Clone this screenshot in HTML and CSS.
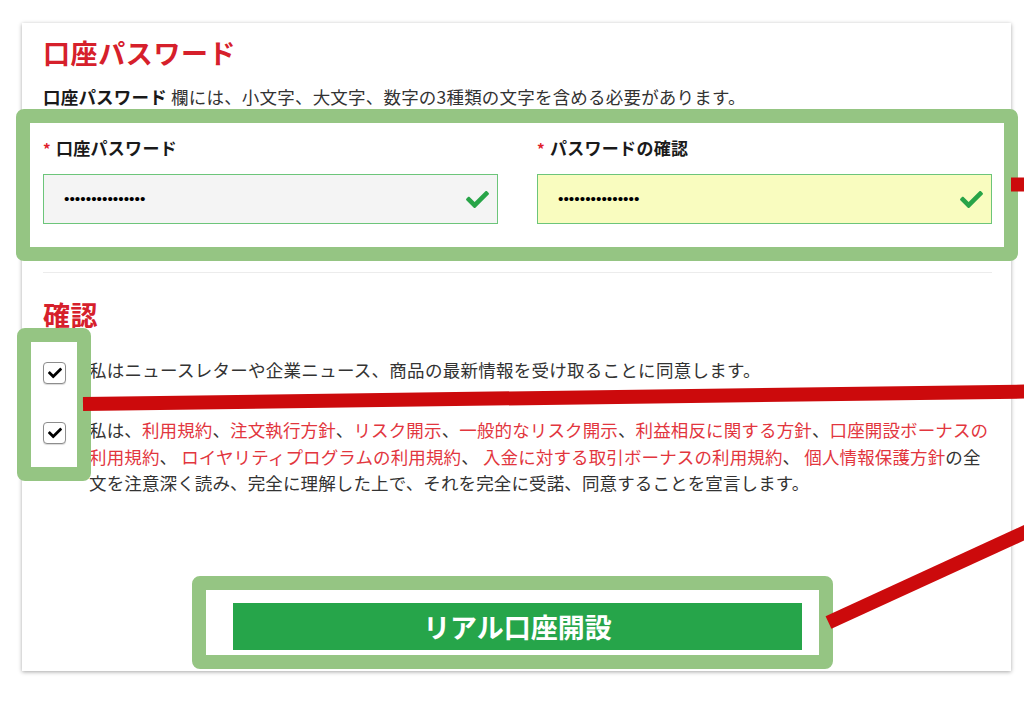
FILE: index.html
```html
<!DOCTYPE html>
<html lang="ja">
<head>
    <meta charset="UTF-8">
    <meta name="viewport" content="width=device-width, initial-scale=1.0">
    <title>口座パスワード</title>
    <link rel="stylesheet" href="styles.css">
</head>
<body>

<div class="page">
    <div class="card">
        <h2 class="title">口座パスワード</h2>
        <p class="note"><strong>口座パスワード</strong> 欄には、小文字、大文字、数字の3種類の文字を含める必要があります。</p>

        <div class="fields">
            <div class="field">
                <label><span class="req">*</span>口座パスワード</label>
                <div class="input-wrap">
                    <input type="password" value="Abcdefgh1234567" readonly>
                    <svg class="ok" viewBox="0 0 512 512"><path d="M173.9 439.4l-166.4-166.4c-10-10-10-26.2 0-36.2l36.2-36.2c10-10 26.2-10 36.2 0L192 312.7 432.1 72.6c10-10 26.2-10 36.2 0l36.2 36.2c10 10 10 26.2 0 36.2l-294.4 294.4c-10 10-26.2 10-36.2 0z"/></svg>
                </div>
            </div>
            <div class="field">
                <label><span class="req">*</span>パスワードの確認</label>
                <div class="input-wrap">
                    <input class="filled" type="password" value="Abcdefgh1234567" readonly>
                    <svg class="ok" viewBox="0 0 512 512"><path d="M173.9 439.4l-166.4-166.4c-10-10-10-26.2 0-36.2l36.2-36.2c10-10 26.2-10 36.2 0L192 312.7 432.1 72.6c10-10 26.2-10 36.2 0l36.2 36.2c10 10 10 26.2 0 36.2l-294.4 294.4c-10 10-26.2 10-36.2 0z"/></svg>
                </div>
            </div>
        </div>

        <hr class="divider">

        <h2 class="title confirm">確認</h2>

        <div class="consent first">
            <span class="box"><svg viewBox="0 0 512 512"><path d="M173.9 439.4l-166.4-166.4c-10-10-10-26.2 0-36.2l36.2-36.2c10-10 26.2-10 36.2 0L192 312.7 432.1 72.6c10-10 26.2-10 36.2 0l36.2 36.2c10 10 10 26.2 0 36.2l-294.4 294.4c-10 10-26.2 10-36.2 0z"/></svg></span>
            <p>私はニュースレターや企業ニュース、商品の最新情報を受け取ることに同意します。</p>
        </div>

        <div class="consent second">
            <span class="box"><svg viewBox="0 0 512 512"><path d="M173.9 439.4l-166.4-166.4c-10-10-10-26.2 0-36.2l36.2-36.2c10-10 26.2-10 36.2 0L192 312.7 432.1 72.6c10-10 26.2-10 36.2 0l36.2 36.2c10 10 10 26.2 0 36.2l-294.4 294.4c-10 10-26.2 10-36.2 0z"/></svg></span>
            <p>私は、<a href="#">利用規約</a>、<a href="#">注文執行方針</a>、<a href="#">リスク開示</a>、<a href="#">一般的なリスク開示</a>、<a href="#">利益相反に関する方針</a>、<a href="#">口座開設ボーナスの</a><a href="#">利用規約</a>、 <a href="#">ロイヤリティプログラムの利用規約</a>、 <a href="#">入金に対する取引ボーナスの利用規約</a>、 <a href="#">個人情報保護方針</a><span>の全</span><span>文を注意深く読み、完全に理解した上で、それを完全に受諾、同意することを宣言します。</span></p>
        </div>

        <button class="submit">リアル口座開設</button>
    </div>

    <!-- annotation marks drawn over the form -->
    <div class="mark mark-fields"></div>
    <div class="mark mark-checks"></div>
    <div class="mark mark-submit"></div>

    <svg class="arrows" width="1024" height="702" viewBox="0 0 1024 702">
        <line x1="1011" y1="184.5" x2="1030" y2="184.5"/>
        <line x1="83" y1="404" x2="1030" y2="391.5"/>
        <line x1="828.5" y1="622.5" x2="1030" y2="530"/>
    </svg>
</div>

</body>
</html>
```

FILE: styles.css
```css
body {
    margin: 0;
    background: #fff;
    color: #333;
    font-family: "Noto Sans CJK JP", "Noto Sans", sans-serif;
}

.page {
    position: relative;
    width: 1024px;
    height: 702px;
    overflow: hidden;
}

.card {
    box-sizing: border-box;
    width: 989px;
    margin: 23px 0 0 22px;
    padding: 13px 19px 21px 21px;
    background: #fff;
    box-shadow: 0 1px 4px rgba(0, 0, 0, 0.35);
}

.title {
    margin: 0;
    font-size: 27px;
    line-height: 34px;
    font-weight: bold;
    letter-spacing: 0.6px;
    color: #d6202b;
}

.note {
    margin: 14px 0 0;
    font-size: 17.5px;
    line-height: 26px;
    letter-spacing: 0.2px;
    color: #333;
}

.note strong {
    color: #1a1a1a;
}

.fields {
    display: grid;
    grid-template-columns: 1fr 1fr;
    gap: 39px;
    margin-top: 26px;
}

.field label {
    display: block;
    font-size: 17px;
    line-height: 24px;
    font-weight: bold;
    letter-spacing: 0.3px;
    color: #1a1a1a;
}

.req {
    color: #e0202b;
    font-size: 15px;
    margin-right: 5px;
}

.input-wrap {
    position: relative;
    margin-top: 13px;
}

.input-wrap input {
    display: block;
    box-sizing: border-box;
    width: 100%;
    height: 50px;
    padding: 0 0 0 20px;
    border: 1px solid #6cc57a;
    background: #f4f4f4;
    color: #000;
    font-family: "Liberation Sans", Arial, sans-serif;
    font-size: 15.5px;
    outline: none;
}

.input-wrap input.filled {
    background: #f9fcbf;
}

.ok {
    position: absolute;
    right: 8px;
    top: 14px;
    width: 25px;
    height: 23px;
    fill: #28a448;
}

.divider {
    margin: 48px 0 0;
    border: none;
    border-top: 1px solid #ececec;
}

.confirm {
    margin-top: 25px;
}

.consent {
    display: flex;
    align-items: flex-start;
}

.consent.first {
    margin-top: 25px;
}

.consent.second {
    margin-top: 33px;
}

.consent p {
    margin: 0;
    width: 903px;
    font-size: 17.5px;
    line-height: 26.5px;
    letter-spacing: 0.27px;
    color: #333;
}

.consent.second p {
    letter-spacing: 0.13px;
}

.consent a {
    color: #e2363e;
    text-decoration: none;
}

.box {
    display: flex;
    justify-content: center;
    align-items: center;
    flex: none;
    box-sizing: border-box;
    width: 23px;
    height: 22px;
    margin: 5px 23px 0 0;
    border: 1px solid #8d8d8d;
    border-radius: 4px;
    background: #fff;
    box-shadow: 0 1px 1px rgba(0, 0, 0, 0.15);
}

.box svg {
    width: 16px;
    height: 14px;
    fill: #000;
}

.submit {
    display: block;
    width: 569px;
    height: 47px;
    margin: 106px auto 0;
    padding: 0;
    border: none;
    background: #26a54a;
    color: #fff;
    font-family: "Noto Sans CJK JP", sans-serif;
    font-size: 27px;
    font-weight: bold;
    cursor: pointer;
}

/* green highlight frames */
.mark {
    position: absolute;
    box-sizing: border-box;
    border: 14px solid #95c583;
    border-radius: 8px;
}

.mark-fields {
    left: 16px;
    top: 109px;
    width: 1002px;
    height: 152px;
}

.mark-checks {
    left: 17px;
    top: 328px;
    width: 74px;
    height: 153px;
}

.mark-submit {
    left: 192px;
    top: 576px;
    width: 641px;
    height: 93px;
}

.arrows {
    position: absolute;
    left: 0;
    top: 0;
    pointer-events: none;
}

.arrows line {
    stroke: #cc0a0c;
    stroke-width: 14;
}
```
